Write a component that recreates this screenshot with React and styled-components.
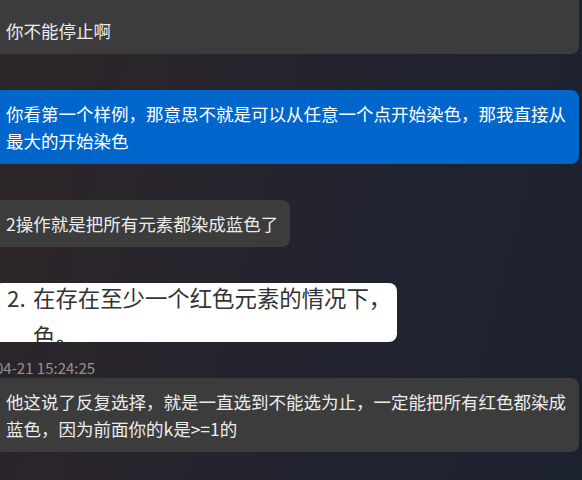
import React from "react";
import styled, { createGlobalStyle } from "styled-components";

const Global = createGlobalStyle`
  html, body { margin: 0; padding: 0; }
  body {
    background: #1f2230;
    font-family: "Noto Sans CJK SC", "Noto Sans", sans-serif;
  }
`;

const Page = styled.div`
  width: 582px;
  height: 480px;
  overflow: hidden;
  background: linear-gradient(105deg, #2d2529 0%, #2a252c 28%, #22232f 58%, #1c2130 100%);
`;

const Column = styled.div`
  display: flex;
  flex-direction: column;
  gap: 16px;
  width: 585px;
  margin: -27px 0 0 -6px;
`;

const Group = styled.div`
  display: flex;
  flex-direction: column;
  align-items: flex-start;
`;

const Stamp = styled.div`
  height: 20px;
  line-height: 20px;
  padding-left: 1px;
  font-size: 15px;
  color: #929292;
  visibility: ${(p) => (p.$visible ? "visible" : "hidden")};
  white-space: nowrap;
`;

const Bubble = styled.div`
  box-sizing: border-box;
  max-width: 100%;
  width: ${(p) => (p.$wide ? "100%" : "auto")};
  padding: ${(p) => p.$padTop || 10}px 12px 10px 12px;
  border-radius: 8px;
  background: ${(p) => (p.$mine ? "#0066cc" : "#3c3c3c")};
  color: ${(p) => (p.$mine ? "#ffffff" : "#ececec")};
  font-size: 17.5px;
  line-height: 27px;
  word-break: break-all;
`;

const ImageBubble = styled.div`
  box-sizing: border-box;
  width: 403px;
  height: 59px;
  overflow: hidden;
  border-radius: 8px;
  background: #ffffff;
  padding-left: 13px;
`;

const ListItem = styled.div`
  display: flex;
  margin-top: -5px;
  color: #333333;
  font-size: 22.4px;
  line-height: 38px;
  white-space: nowrap;
`;

const Marker = styled.span`
  flex: 0 0 26px;
`;

const ItemBody = styled.span`
  display: block;
`;

export default function App() {
  return (
    <Page>
      <Global />
      <Column>
        <Group>
          <Stamp />
          <Bubble $wide $padTop={24}>你不能停止啊</Bubble>
        </Group>
        <Group>
          <Stamp />
          <Bubble $mine>
            你看第一个样例，那意思不就是可以从任意一个点开始染色，那我直接从最大的开始染色
          </Bubble>
        </Group>
        <Group>
          <Stamp />
          <Bubble>2操作就是把所有元素都染成蓝色了</Bubble>
        </Group>
        <Group>
          <Stamp />
          <ImageBubble>
            <ListItem>
              <Marker>2.</Marker>
              <ItemBody>
                在存在至少一个红色元素的情况下，
                <br />
                色。
              </ItemBody>
            </ListItem>
          </ImageBubble>
        </Group>
        <Group>
          <Stamp $visible>04-21 15:24:25</Stamp>
          <Bubble>
            他这说了反复选择，就是一直选到不能选为止，一定能把所有红色都染成蓝色，因为前面你的k是&gt;=1的
          </Bubble>
        </Group>
      </Column>
    </Page>
  );
}
